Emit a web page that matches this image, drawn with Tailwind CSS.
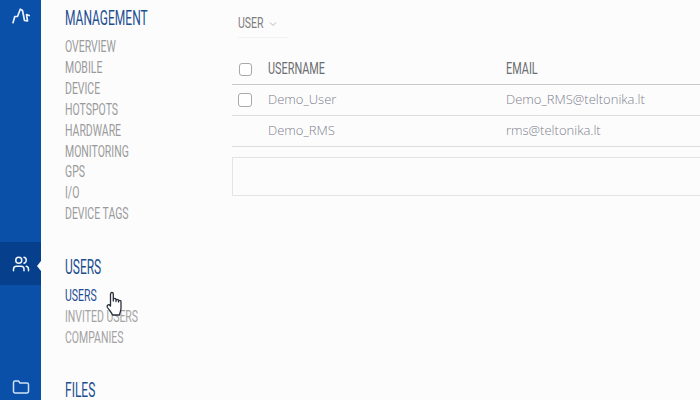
<!DOCTYPE html>
<html><head><meta charset="utf-8"><script src="https://cdn.jsdelivr.net/npm/@tailwindcss/browser@4"></script></head>
<body class="m-0">
<div class="flex h-[400px] w-[700px] overflow-hidden bg-[#fcfcfd] font-['Open_Sans',sans-serif]">
  <aside class="relative flex h-full w-[41px] shrink-0 flex-col bg-[#0a4fa8]">
    <div class="flex h-[36px] items-start justify-start">
      <svg class="ml-[12px] mt-[8px]" width="18" height="16" viewBox="0 0 18 16" fill="none" stroke="#e8f1fb" stroke-width="1.700" stroke-linecap="round" stroke-linejoin="round"><path d="M1 14.700 L2.800 8.500 L5.500 8.500 L8.300 1.200 L10.500 2.500 L12.500 12.500 L15.500 13 L14.500 6.500 L17.200 7.500"/></svg>
    </div>
    <div class="mt-[206px] flex h-[43px] items-center justify-center bg-[#063f8b]">
      <svg width="18" height="18" viewBox="0 0 24 24" fill="none" stroke="#f2f6fc" stroke-width="2" stroke-linecap="round" stroke-linejoin="round"><path d="M16 21v-2a4 4 0 0 0-4-4H6a4 4 0 0 0-4 4v2"/><circle cx="9" cy="7" r="4"/><path d="M22 21v-2a4 4 0 0 0-3-3.870"/><path d="M16 3.130a4 4 0 0 1 0 7.750"/></svg>
    </div>
    <div class="absolute left-[37px] top-[261px] h-0 w-0 border-y-[5px] border-r-[4px] border-y-transparent border-r-[#fcfcfd]"></div>
    <div class="mt-[94px] flex justify-center">
      <svg width="18" height="16" viewBox="0 0 18 16" fill="none" stroke="#cfe2f7" stroke-width="1.500" stroke-linejoin="round"><path d="M1.500 3.500 a1.500 1.500 0 0 1 1.500-1.500 h3.500 l1.500 2 h7 a1.500 1.500 0 0 1 1.500 1.500 v7 a1.500 1.500 0 0 1-1.500 1.500 h-12 a1.500 1.500 0 0 1-1.500-1.500 z"/></svg>
    </div>
  </aside>

  <nav class="relative w-[191px] shrink-0 pl-[24px] font-['Roboto',sans-serif] uppercase">
    <h2 class="mt-[8px] h-[21px] origin-left scale-x-[.6] whitespace-nowrap text-[20px] leading-[21px] font-normal text-[#1c4f90]">Management</h2>
    <ul class="mt-[7px] text-[16px] leading-[21px] text-[#9a9a9a]">
      <li class="h-[21px] origin-left scale-x-[.655] whitespace-nowrap">Overview</li>
      <li class="h-[21px] origin-left scale-x-[.655] whitespace-nowrap">Mobile</li>
      <li class="h-[21px] origin-left scale-x-[.655] whitespace-nowrap">Device</li>
      <li class="h-[21px] origin-left scale-x-[.655] whitespace-nowrap">Hotspots</li>
      <li class="h-[21px] origin-left scale-x-[.655] whitespace-nowrap">Hardware</li>
      <li class="h-[20px] origin-left scale-x-[.655] whitespace-nowrap">Monitoring</li>
      <li class="h-[21px] origin-left scale-x-[.655] whitespace-nowrap">GPS</li>
      <li class="h-[21px] origin-left scale-x-[.655] whitespace-nowrap">I/O</li>
      <li class="h-[21px] origin-left scale-x-[.655] whitespace-nowrap">Device Tags</li>
    </ul>
    <h2 class="mt-[33px] h-[21px] origin-left scale-x-[.6] whitespace-nowrap text-[20px] leading-[21px] font-normal text-[#1c4f90]">Users</h2>
    <ul class="mt-[7px] text-[16px] leading-[21px] text-[#a3a3a3]">
      <li class="h-[21px] origin-left scale-x-[.655] whitespace-nowrap text-[#1c4f90]">Users</li>
      <li class="h-[21px] origin-left scale-x-[.655] whitespace-nowrap">Invited Users</li>
      <li class="h-[21px] origin-left scale-x-[.655] whitespace-nowrap">Companies</li>
    </ul>
    <h2 class="mt-[32px] h-[20px] origin-left scale-x-[.6] whitespace-nowrap text-[20px] leading-[20px] font-normal text-[#1c4f90]">Files</h2>
    <svg class="absolute left-[65px] top-[291px]" width="20" height="26" viewBox="0 0 20 26" fill="#fff" stroke="#2a2f3a" stroke-width="1.300" stroke-linejoin="round" stroke-linecap="round"><path d="M4.500 13 V3 C4.500 1 7.300 1 7.300 3 V10 V8.500 C7.300 7 10 7 10 8.500 V10.500 V9.500 C10 8 12.500 8 12.500 9.500 V11 V10.500 C12.500 9 15 9 15 10.500 V17 C15 20 14 21 13.500 24 H6.500 C6 22 3.500 19.500 1.500 16.500 C0.500 14.500 2.500 12.500 4.500 15 Z"/></svg>
  </nav>

  <main class="min-w-0 flex-1 text-[13px] font-light">
    <div class="ml-[6px] flex h-[38px] w-[50px] items-center border-b border-[#f0f1f3] pt-[10px]">
      <span class="w-[31px] origin-left scale-x-[.68] font-['Roboto',sans-serif] text-[15.500px] font-normal text-[#7d7d7d]">USER</span>
      <svg width="8" height="6" viewBox="0 0 8 6" fill="none" stroke="#b5b8bd" stroke-width="1"><path d="M1 1.500 L4 4.500 L7 1.500"/></svg>
    </div>
    <div class="mt-[15px] flex h-[32px] items-center border-b border-[#c8c9cb] pt-[1px] font-['Roboto',sans-serif] text-[16px] font-normal text-[#6b6d70]">
      <div class="w-[36px] pl-[7px]"><span class="block size-[13px] rounded-[3px] border border-[#a8a9ab] bg-white"></span></div>
      <div class="w-[238px] origin-left scale-x-[.68]">USERNAME</div>
      <div class="origin-left scale-x-[.68]">EMAIL</div>
    </div>
    <div class="flex h-[31px] items-center border-b border-[#dcdde0] text-[#7e818e]">
      <div class="w-[36px] pl-[6px]"><span class="block size-[14px] rounded-[3px] border border-[#a8a9ab] bg-white"></span></div>
      <div class="w-[238px]">Demo_User</div>
      <div>Demo_RMS@teltonika.lt</div>
    </div>
    <div class="flex h-[31px] items-center border-b border-[#dcdde0] text-[#7e818e]">
      <div class="w-[36px]"></div>
      <div class="w-[238px]">Demo_RMS</div>
      <div>rms@teltonika.lt</div>
    </div>
    <div class="mt-[10px] h-[39px] border border-r-0 border-[#e3e4e6]"></div>
  </main>
</div>
</body></html>
